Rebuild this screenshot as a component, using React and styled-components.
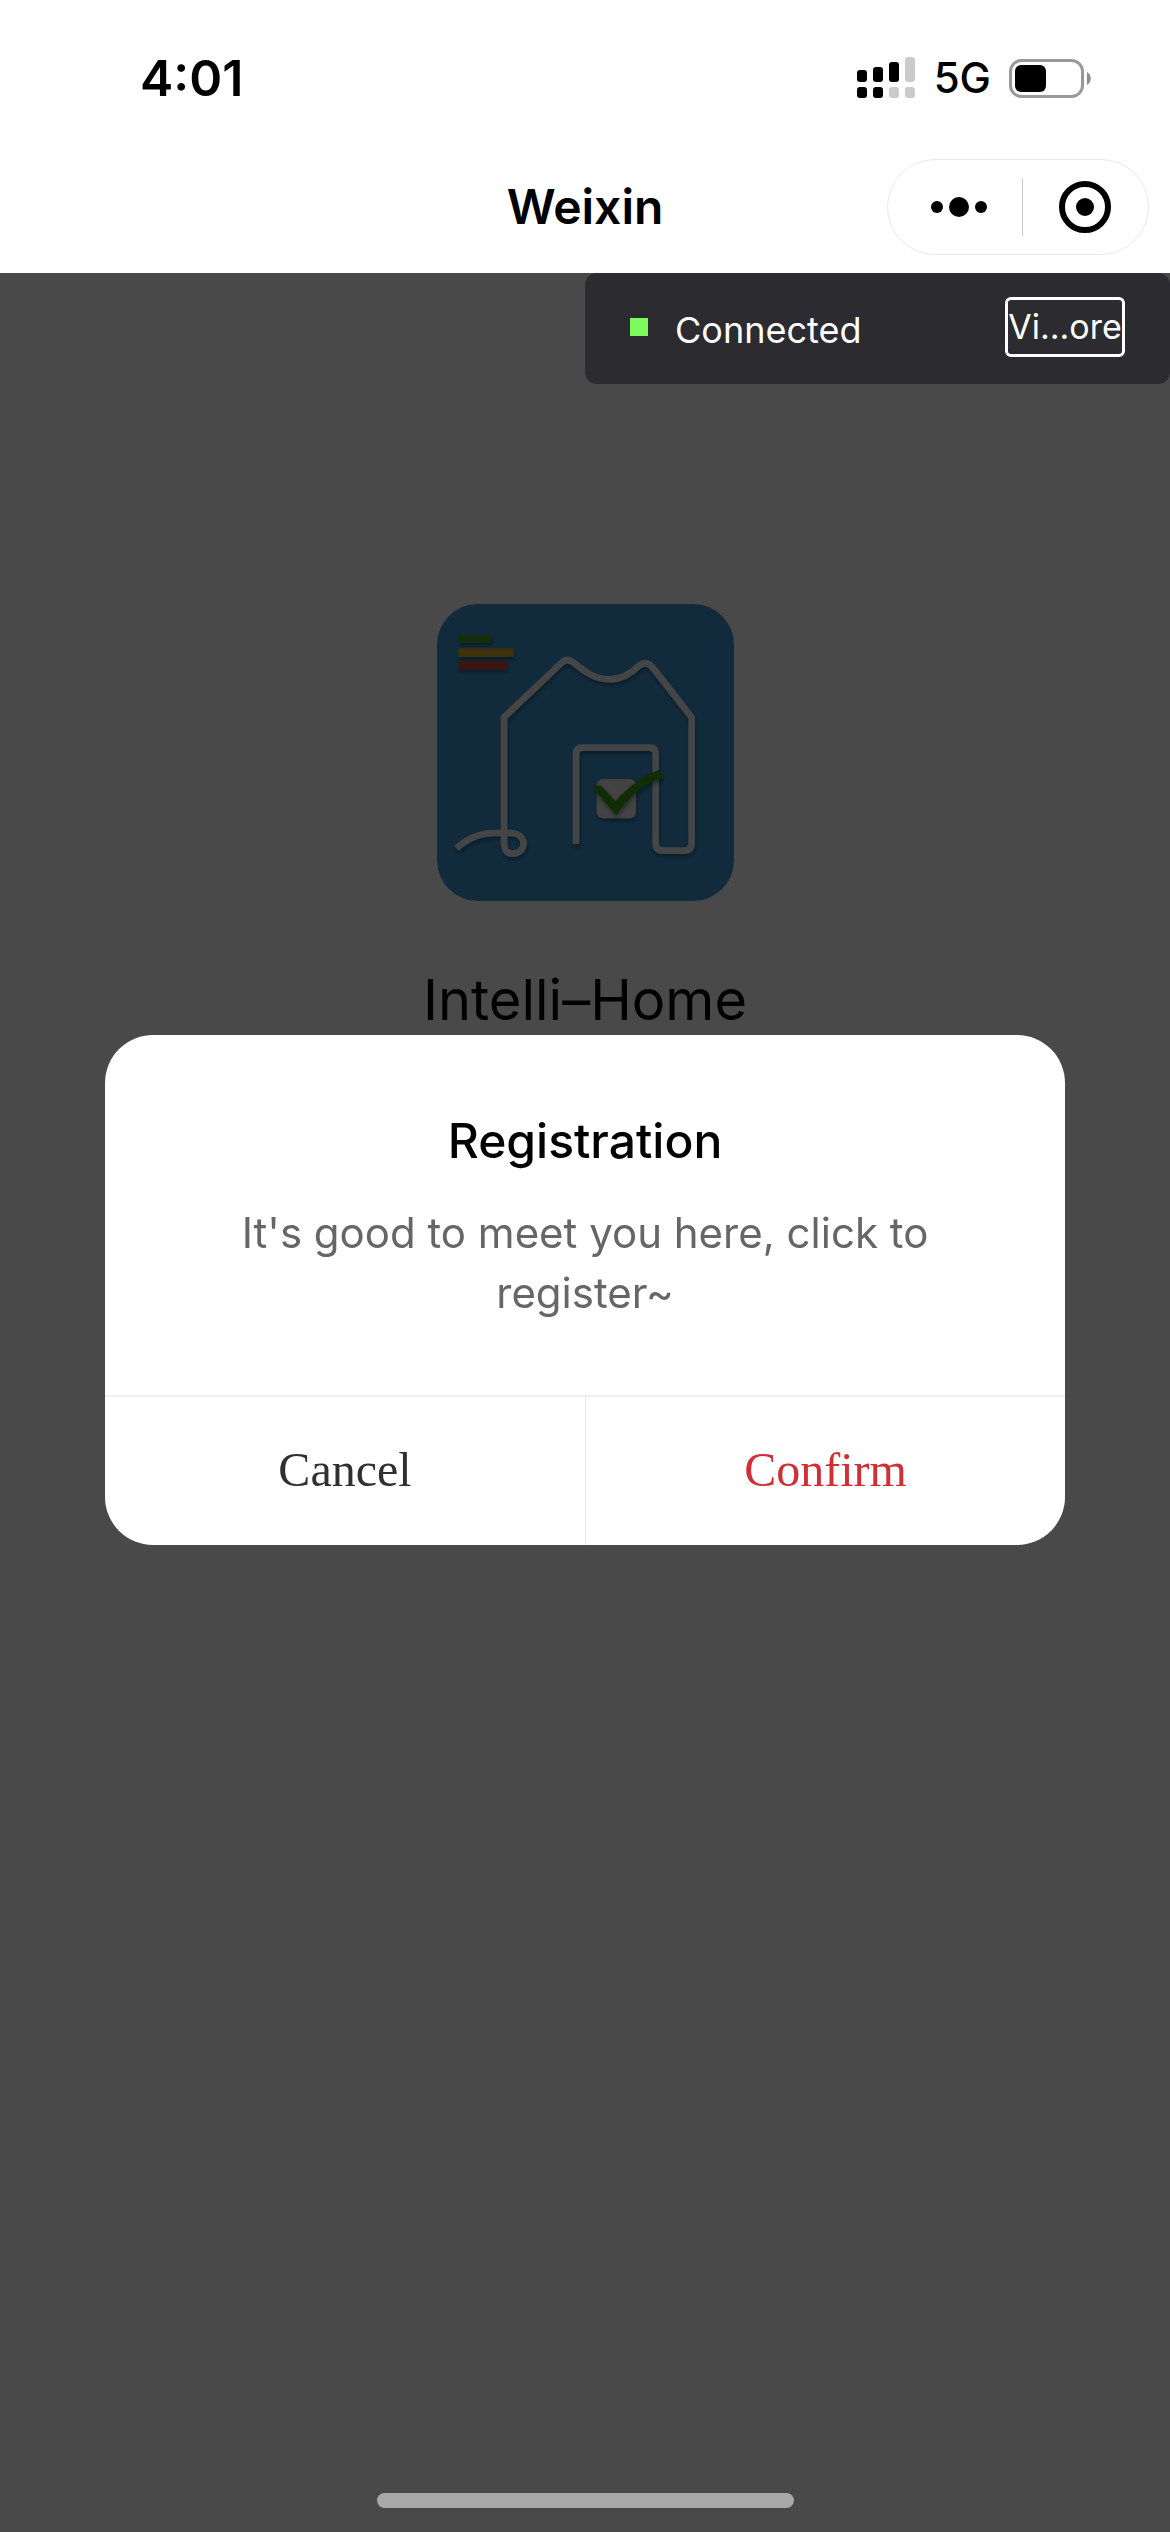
import React from "react";
import styled, { createGlobalStyle } from "styled-components";

const GlobalStyle = createGlobalStyle`
  *, *::before, *::after { box-sizing: border-box; }
  body {
    margin: 0;
    background: #f5f5f5;
    color: #000;
    font-family: Inter, "Liberation Sans", sans-serif;
  }
  button { font: inherit; cursor: pointer; }
`;

const Screen = styled.div`
  min-height: 100vh;
  display: flex;
  flex-direction: column;
`;

const Header = styled.header`
  position: relative;
  z-index: 3;
  background: #fff;
`;

const StatusBar = styled.div`
  height: 156px;
  padding: 0 78px 0 140px;
  display: flex;
  align-items: center;
  justify-content: space-between;
`;

const Time = styled.time`
  font-size: 50px;
  font-weight: 600;
  line-height: 60px;
`;

const StatusIcons = styled.div`
  display: flex;
  align-items: center;
  gap: 18px;
`;

const Network = styled.span`
  font-size: 42px;
  font-weight: 500;
  line-height: 48px;
`;

const NavBar = styled.div`
  height: 117px;
  padding: 3px 21px 18px;
  display: grid;
  grid-template-columns: 1fr auto 1fr;
  align-items: center;
`;

const NavTitle = styled.h1`
  grid-column: 2;
  margin: 0;
  font-size: 48px;
  font-weight: 600;
  line-height: 60px;
`;

const Capsule = styled.div`
  justify-self: end;
  display: flex;
  align-items: center;
  width: 262px;
  height: 96px;
  border: 1px solid #e8e8e8;
  border-radius: 48px;
`;

const CapsuleButton = styled.button`
  flex: 1;
  height: 58px;
  padding: 0 0 0 8px;
  display: flex;
  align-items: center;
  justify-content: center;
  border: 0;
  background: none;

  & + & {
    padding: 0;
    border-left: 1px solid #c8c8c8;
  }
`;

const Main = styled.main`
  position: relative;
  flex: 1;
  display: flex;
  flex-direction: column;
  align-items: center;
  padding-top: 331px;
`;

const AppName = styled.h2`
  margin: 66px 0 0;
  font-size: 56px;
  font-weight: 400;
  line-height: 66px;
`;

const Connection = styled.aside`
  position: absolute;
  top: 0;
  right: 0;
  z-index: 2;
  width: 50%;
  height: 111px;
  padding: 0 45px 3px;
  display: flex;
  align-items: center;
  gap: 27px;
  border-radius: 12px;
  background: #2c2b30;
  color: #fff;
  font-size: 36px;
  line-height: 54px;
`;

const StatusDot = styled.span`
  width: 18px;
  height: 18px;
  background: #7dfb5c;
`;

const ConnectionLabel = styled.span`
  flex: 1;
  padding-top: 5px;
`;

const ViewButton = styled.button`
  width: 120px;
  height: 60px;
  padding: 0;
  border: 3px solid #fff;
  border-radius: 6px;
  background: none;
  color: #fff;
  font-size: 34px;
  line-height: 54px;
  text-align: center;
  white-space: nowrap;
`;

const Overlay = styled.div`
  position: fixed;
  inset: 0;
  z-index: 1;
  padding: 48px 105px 0;
  display: flex;
  align-items: center;
  background: rgba(0, 0, 0, 0.7);
`;

const Dialog = styled.section`
  width: 100%;
  overflow: hidden;
  border-radius: 48px;
  background: #fff;
  text-align: center;
`;

const DialogBody = styled.div`
  padding: 76px 96px 72px;
`;

const DialogTitle = styled.h3`
  margin: 0 0 32px;
  font-size: 48px;
  font-weight: 500;
  line-height: 60px;
`;

const DialogText = styled.p`
  margin: 0;
  color: #666;
  font-size: 42px;
  line-height: 60px;
`;

const DialogActions = styled.div`
  display: grid;
  grid-template-columns: 1fr 1fr;
  border-top: 2px solid #efefef;
`;

const DialogButton = styled.button`
  height: 148px;
  padding: 0 0 4px;
  border: 0;
  background: none;
  color: ${({ $primary }) => ($primary ? "#cf3035" : "#303030")};
  font-family: "Liberation Serif", "Times New Roman", serif;
  font-size: 48px;

  & + & { border-left: 1px solid #e8e8e8; }
`;

const HomeIndicator = styled.div`
  position: fixed;
  left: 50%;
  bottom: 24px;
  z-index: 2;
  width: 417px;
  height: 15px;
  margin-left: -208px;
  border-radius: 8px;
  background: #a8a8a8;
`;

const Signal = () => (
  <svg width="60" height="42" viewBox="0 0 60 42" aria-hidden="true">
    <rect x="1" y="13" width="10" height="12" rx="3" />
    <rect x="17" y="10" width="10" height="15" rx="3" />
    <rect x="33" y="5" width="10" height="20" rx="3" />
    <rect x="49" y="0" width="10" height="25" rx="3" fill="#cbcbcb" />
    <rect x="1" y="30" width="10" height="11" rx="3" />
    <rect x="17" y="30" width="10" height="11" rx="3" />
    <rect x="33" y="30" width="10" height="11" rx="3" fill="#cbcbcb" />
    <rect x="49" y="30" width="10" height="11" rx="3" fill="#cbcbcb" />
  </svg>
);

const Battery = () => (
  <svg width="83" height="39" viewBox="0 0 83 39" aria-hidden="true">
    <rect x="1.5" y="1.5" width="72" height="36" rx="11" fill="none" stroke="#999" strokeWidth="3" />
    <rect x="6" y="6" width="31" height="27" rx="6" />
    <path d="M78 13c5 3 5 10 0 13z" fill="#8c8c8c" />
  </svg>
);

const MoreIcon = () => (
  <svg width="56" height="20" viewBox="0 0 56 20" aria-hidden="true">
    <circle cx="6" cy="10" r="6" />
    <circle cx="28" cy="10" r="10" />
    <circle cx="50" cy="10" r="6" />
  </svg>
);

const CloseIcon = () => (
  <svg width="52" height="52" viewBox="0 0 52 52" aria-hidden="true">
    <circle cx="26" cy="26" r="23" fill="none" stroke="#000" strokeWidth="6" />
    <circle cx="26" cy="26" r="9" />
  </svg>
);

const Logo = () => (
  <svg width="297" height="297" viewBox="50 43 891 891" role="img" aria-label="Intelli–Home logo">
    <defs>
      <filter id="shade" x="-20%" y="-20%" width="140%" height="140%">
        <feDropShadow dx="2" dy="8" stdDeviation="6" floodColor="#000" floodOpacity="0.4" />
      </filter>
    </defs>
    <rect x="50" y="43" width="891" height="891" rx="122" fill="#3d91ca" />
    <g filter="url(#shade)">
      <rect x="115" y="136" width="97" height="24" fill="#459c26" />
      <rect x="115" y="176" width="165" height="26" fill="#d2a424" />
      <rect x="115" y="215" width="145" height="24" fill="#c84a32" />
    </g>
    <g fill="none" stroke="#e4e6ea" strokeWidth="20" filter="url(#shade)">
      <path
        strokeLinejoin="round"
        d="M108 776C150 740 185 730 225 730H268C325 730 320 792 276 792C256 792 251 778 251 750V383L425 218Q441 204 459 218C490 243 520 269 569 269C608 269 633 251 656 228Q678 212 695 231L814 383V760Q814 783 791 783H730Q706 783 706 760V492Q706 474 688 474H486Q467 474 467 493V763"
      />
    </g>
    <rect x="529" y="568" width="118" height="118" rx="20" fill="#e0e1e5" filter="url(#shade)" />
    <path
      d="M516 594L540 586L586 634C626 588 666 560 716 540L731 564C675 578 632 613 588 677Z"
      fill="#389718"
      filter="url(#shade)"
    />
  </svg>
);

export default function App() {
  return (
    <>
      <GlobalStyle />
      <Screen>
        <Header>
          <StatusBar>
            <Time>4:01</Time>
            <StatusIcons>
              <Signal />
              <Network>5G</Network>
              <Battery />
            </StatusIcons>
          </StatusBar>
          <NavBar>
            <NavTitle>Weixin</NavTitle>
            <Capsule>
              <CapsuleButton type="button" aria-label="More"><MoreIcon /></CapsuleButton>
              <CapsuleButton type="button" aria-label="Close"><CloseIcon /></CapsuleButton>
            </Capsule>
          </NavBar>
        </Header>
        <Main>
          <Logo />
          <AppName>Intelli–Home</AppName>
          <Connection>
            <StatusDot />
            <ConnectionLabel>Connected</ConnectionLabel>
            <ViewButton type="button">Vi...ore</ViewButton>
          </Connection>
        </Main>
        <Overlay>
          <Dialog role="dialog" aria-modal="true" aria-labelledby="dialog-title">
            <DialogBody>
              <DialogTitle id="dialog-title">Registration</DialogTitle>
              <DialogText>It's good to meet you here, click to register~</DialogText>
            </DialogBody>
            <DialogActions>
              <DialogButton type="button">Cancel</DialogButton>
              <DialogButton type="button" $primary>Confirm</DialogButton>
            </DialogActions>
          </Dialog>
        </Overlay>
        <HomeIndicator />
      </Screen>
    </>
  );
}
